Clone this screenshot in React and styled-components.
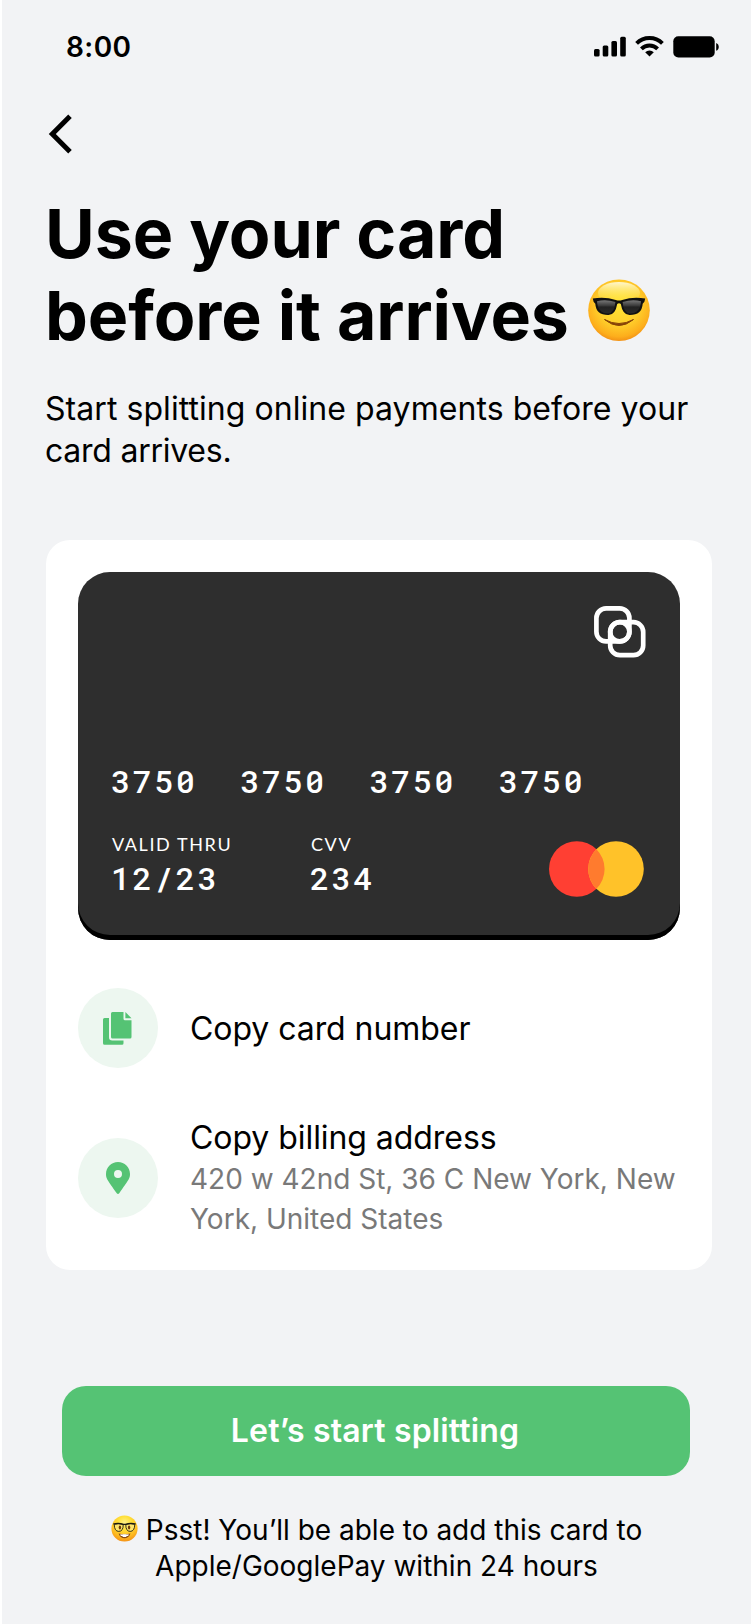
import React from "react";
import styled, { createGlobalStyle } from "styled-components";

const GlobalStyle = createGlobalStyle`
  * { box-sizing: border-box; }
  body {
    margin: 0;
    background: #f2f3f5;
    color: #000;
    font-family: Inter, "Liberation Sans", sans-serif;
  }
  h1, p { margin: 0; }
  svg { display: block; flex: none; }
`;

const Screen = styled.main`
  display: flex;
  flex-direction: column;
  width: 751px;
  height: 1624px;
  border-left: 2px solid #fff;
  background: #f2f3f5;
  overflow: hidden;
`;

const StatusBar = styled.header`
  display: flex;
  align-items: center;
  justify-content: space-between;
  height: 94px;
  padding: 0 32px 0 64px;
`;

const Time = styled.span`
  font-size: 28px;
  font-weight: 600;
  line-height: 32px;
  letter-spacing: 0.4px;
`;

const StatusIcons = styled.div`
  display: flex;
  align-items: flex-start;
  gap: 9px;
  height: 22px;
`;

const BackButton = styled.button`
  align-self: flex-start;
  display: flex;
  margin: 20px 0 0 44px;
  padding: 0;
  border: 0;
  background: none;
`;

const Intro = styled.section`
  margin-top: 38px;
  padding-left: 43px;
`;

const Title = styled.h1`
  font-size: 68px;
  font-weight: 700;
  line-height: 82px;
  letter-spacing: -0.08px;
  white-space: nowrap;
`;

const TitleRow = styled.span`
  display: flex;
  gap: 19px;

  svg { margin-top: 5px; }
`;

const Subtitle = styled.p`
  margin-top: 32px;
  width: 660px;
  font-size: 32px;
  line-height: 42px;
  letter-spacing: 0.06px;
`;

const SubtitleEnd = styled.span`
  letter-spacing: -0.25px;
`;

const Panel = styled.section`
  width: 666px;
  margin: 68px 0 0 44px;
  padding: 32px 32px 31px;
  border-radius: 24px;
  background: #fff;
`;

const PaymentCard = styled.div`
  display: flex;
  flex-direction: column;
  height: 368px;
  padding: 34px 34px 0;
  border-radius: 32px;
  background: #2e2e2e;
  box-shadow: inset 0 -5px 0 #000;
  color: #fff;
`;

const CardTop = styled.div`
  display: flex;
  justify-content: flex-end;
  height: 155px;
`;

const Digits = styled.span`
  font-family: "Roboto Mono", "Liberation Mono", monospace;
  font-size: 32px;
  font-weight: 500;
  line-height: 40px;
  letter-spacing: 2.4px;
`;

const CardNumber = styled.div`
  display: flex;
  gap: 42.8px;
  margin-left: -1px;
`;

const CardFooter = styled.div`
  display: flex;
  justify-content: space-between;
  align-items: flex-start;
  margin-top: 32px;
  padding-right: 2px;

  > svg { margin-top: 8px; }
`;

const CardFields = styled.div`
  display: flex;
`;

const Field = styled.div`
  display: flex;
  flex-direction: column;
  width: ${(p) => p.$width}px;

  ${Digits} { margin: 3px 0 0 -1px; }
`;

const FieldLabel = styled.span`
  font-family: Lato, sans-serif;
  font-size: 18px;
  line-height: 22px;
  letter-spacing: 1.6px;
`;

const ActionRow = styled.div`
  display: flex;
  align-items: center;
  gap: 32px;
  margin-top: 48px;
`;

const ActionText = styled.div`
  padding-top: ${(p) => p.$offset}px;
`;

const IconBadge = styled.span`
  display: flex;
  align-items: center;
  justify-content: center;
  flex: none;
  width: 80px;
  height: 80px;
  border-radius: 50%;
  background: #edf7f0;
`;

const ActionTitle = styled.div`
  font-size: 32px;
  line-height: 42px;
  letter-spacing: -0.06px;
`;

const Address = styled.div`
  font-size: 28px;
  line-height: 40px;
  color: #797979;
`;

const PrimaryButton = styled.button`
  flex: none;
  width: 628px;
  height: 90px;
  margin: 116px 0 0 60px;
  padding: 0 2px 0 0;
  border: 0;
  border-radius: 24px;
  background: #55c374;
  color: #fff;
  font: 600 32px/40px Inter, sans-serif;
  letter-spacing: 0.15px;
`;

const Hint = styled.p`
  margin-top: 36px;
  font-size: 28px;
  line-height: 36px;
  text-align: center;
`;

const HintRow = styled.span`
  display: flex;
  justify-content: center;
  gap: 8px;

  svg { margin-top: 3px; }
`;

const SignalIcon = () => (
  <svg width="32" height="22" viewBox="0 0 32 22">
    <rect x="0" y="13" width="5.6" height="7.5" rx="1.5" />
    <rect x="8.7" y="9.5" width="5.6" height="11" rx="1.5" />
    <rect x="17.4" y="5" width="5.6" height="15.5" rx="1.5" />
    <rect x="26.2" y="0.8" width="5.6" height="19.7" rx="1.5" />
  </svg>
);

const WifiIcon = () => (
  <svg width="29" height="22" viewBox="0 0 29 22" fill="none" stroke="#000" strokeWidth="3.9">
    <path d="M1.6 7.4a18.2 18.2 0 0 1 25.8 0" />
    <path d="M6.4 12.9a11.5 11.5 0 0 1 16.2 0" />
    <path d="M14.5 20.500 10.200 16.200a6.100 6.100 0 0 1 8.600 0z" fill="#000" stroke="none" />
  </svg>
);

const BatteryIcon = () => (
  <svg width="46" height="22" viewBox="0 0 46 22">
    <rect x="0.3" y="0.2" width="41.4" height="21.2" rx="5" />
    <path d="M43.2 7c3.4 1.4 3.4 6.4 0 7.8z" />
  </svg>
);

const ChevronIcon = () => (
  <svg width="28" height="40" viewBox="0 0 28 40" fill="none" stroke="#000" strokeWidth="5">
    <path d="M24 2.200 6.300 20l17.700 17.800" />
  </svg>
);

const SunglassesFace = () => (
  <svg width="62" height="63" viewBox="0 0 62 63">
    <defs>
      <radialGradient id="sunFace" cx="50%" cy="40%" r="62%">
        <stop offset="0" stopColor="#ffe436" />
        <stop offset="0.55" stopColor="#ffcf2b" />
        <stop offset="0.85" stopColor="#fdae1c" />
        <stop offset="1" stopColor="#f08a14" />
      </radialGradient>
      <linearGradient id="sunShine" x1="0" y1="0" x2="0" y2="1">
        <stop offset="0" stopColor="#fffbe0" stopOpacity="0.9" />
        <stop offset="1" stopColor="#ffee40" stopOpacity="0" />
      </linearGradient>
      <linearGradient id="sunLens" x1="0" y1="0" x2="0" y2="1">
        <stop offset="0" stopColor="#777" />
        <stop offset="0.45" stopColor="#343434" />
        <stop offset="0.5" stopColor="#222" />
        <stop offset="1" stopColor="#292929" />
      </linearGradient>
    </defs>
    <circle cx="31" cy="31.300" r="30.800" fill="url(#sunFace)" />
    <ellipse cx="31" cy="14" rx="21" ry="11" fill="url(#sunShine)" />
    <path
      d="M4.800 19.500q12-2.200 23 1.500 3.200 1 6.400 0 11-3.700 23-1.500l-.8 3.200-1.700 2q-.8 11.500-13.200 11.300Q34.600 36 32.800 25q-1.800-1.600-3.600 0Q27.400 36 20.500 36 8.100 36.200 7.300 24.700l-1.700-2z"
      fill="#111"
    />
    <path d="M9 22.200q9-2.200 18.400.8Q26.500 34.300 20 34.400 9.600 34.300 9 22.200z" fill="url(#sunLens)" />
    <path d="M53 22.200q-9-2.200-18.400.8Q35.500 34.300 42 34.400 52.400 34.300 53 22.200z" fill="url(#sunLens)" />
    <path d="M16.500 40.500Q31 52.500 45.500 40.500 31 48.500 16.500 40.500z" fill="#874307" stroke="#874307" strokeWidth="1" strokeLinejoin="round" />
  </svg>
);

const NerdFace = () => (
  <svg width="27" height="27" viewBox="0 0 27 27">
    <defs>
      <radialGradient id="nerdFace" cx="50%" cy="28%" r="72%">
        <stop offset="0" stopColor="#fff08a" />
        <stop offset="0.35" stopColor="#ffe03a" />
        <stop offset="0.75" stopColor="#fdba20" />
        <stop offset="1" stopColor="#f59217" />
      </radialGradient>
    </defs>
    <circle cx="13.500" cy="13.500" r="13.100" fill="url(#nerdFace)" />
    <g fill="#ffe56a" stroke="#1c1a12" strokeWidth="0.900">
      <path d="M3.200 9.300q4.500-1.200 9 .2.200 6.800-4.400 6.900Q3.400 16.400 3.200 9.300z" />
      <path d="M23.800 9.300q-4.500-1.200-9 .2-.2 6.800 4.400 6.900 4.400 0 4.600-7.100z" />
    </g>
    <path d="M2.200 9q5.500-1.600 10.300.4h2Q19.300 7.400 24.800 9" fill="none" stroke="#1c1a12" strokeWidth="1.300" />
    <ellipse cx="8.900" cy="12.500" rx="1.200" ry="1.900" fill="#6d3a0b" />
    <ellipse cx="18.100" cy="12.500" rx="1.200" ry="1.900" fill="#6d3a0b" />
    <path d="M7.500 18.600q6 1.500 12 0-1.800 4.700-6 4.700t-6-4.700z" fill="#8a4a12" />
    <path d="M9.200 19.200q4.300.7 8.600 0l-.6 1.700H9.800z" fill="#fff" />
    <path d="M11.600 19.400h3.800v2.600h-3.800z" fill="#fff" />
  </svg>
);

const BrandLogo = () => (
  <svg width="52" height="52" viewBox="0 0 52 52" fill="none" stroke="#fff" strokeWidth="4.700">
    <rect x="2.400" y="2.400" width="33" height="33" rx="9.700" />
    <rect x="16.200" y="16.200" width="33" height="33" rx="9.700" />
    <circle cx="25.800" cy="25.800" r="9.600" />
  </svg>
);

const CardNetworkLogo = () => (
  <svg width="95" height="56" viewBox="0 0 95 56">
    <circle cx="27.800" cy="28" r="27.800" fill="#ff3f33" />
    <circle cx="67" cy="28" r="27.800" fill="#ffc229" />
    <path d="M47.400 8.300a27.800 27.800 0 0 1 0 39.400 27.800 27.800 0 0 1 0-39.400z" fill="#ff7b2e" />
  </svg>
);

const DocumentsIcon = () => (
  <svg width="30" height="33" viewBox="0 0 30 33" fill="#55c374">
    <path d="M1.500 6H6v19.200q0 3.300 3.300 3.300h11.200v2.700q0 1.500-1.500 1.500H1.500Q0 32.700 0 31.200V7.500Q0 6 1.500 6z" />
    <path d="M9.500 0h11v6.800q0 1.500 1.500 1.500h6.500v16.700q0 1.500-1.500 1.500H9.500Q8 26.500 8 25V1.500Q8 0 9.500 0z" />
    <path d="M22.400 0 28.500 6.200h-6.100z" />
  </svg>
);

const PinIcon = () => (
  <svg width="24" height="32" viewBox="0 0 384 512" fill="#55c374">
    <path
      fillRule="evenodd"
      d="M172.268 501.670C26.970 291.031 0 269.413 0 192 0 85.961 85.961 0 192 0s192 85.961 192 192c0 77.413-26.970 99.031-172.268 309.670-9.535 13.774-29.930 13.773-39.464 0zM192 256a64 64 0 1 0 0-128 64 64 0 1 0 0 128z"
    />
  </svg>
);

const numberGroups = ["3750", "3750", "3750", "3750"];

export default function App() {
  return (
    <>
      <GlobalStyle />
      <Screen>
        <StatusBar>
          <Time>8:00</Time>
          <StatusIcons>
            <SignalIcon />
            <WifiIcon />
            <BatteryIcon />
          </StatusIcons>
        </StatusBar>

        <BackButton aria-label="Back">
          <ChevronIcon />
        </BackButton>

        <Intro>
          <Title>
            Use your card
            <TitleRow>
              before it arrives
              <SunglassesFace />
            </TitleRow>
          </Title>
          <Subtitle>
            Start splitting online payments before your
            <br />
            <SubtitleEnd>card arrives.</SubtitleEnd>
          </Subtitle>
        </Intro>

        <Panel>
          <PaymentCard>
            <CardTop>
              <BrandLogo />
            </CardTop>
            <CardNumber>
              {numberGroups.map((group, i) => (
                <Digits key={i}>{group}</Digits>
              ))}
            </CardNumber>
            <CardFooter>
              <CardFields>
                <Field $width={199}>
                  <FieldLabel>VALID THRU</FieldLabel>
                  <Digits>12/23</Digits>
                </Field>
                <Field $width={100}>
                  <FieldLabel>CVV</FieldLabel>
                  <Digits>234</Digits>
                </Field>
              </CardFields>
              <CardNetworkLogo />
            </CardFooter>
          </PaymentCard>

          <ActionRow>
            <IconBadge>
              <DocumentsIcon />
            </IconBadge>
            <ActionText $offset={2}>
              <ActionTitle>Copy card number</ActionTitle>
            </ActionText>
          </ActionRow>

          <ActionRow>
            <IconBadge>
              <PinIcon />
            </IconBadge>
            <ActionText $offset={1}>
              <ActionTitle>Copy billing address</ActionTitle>
              <Address>
                420 w 42nd St, 36 C New York, New
                <br />
                York, United States
              </Address>
            </ActionText>
          </ActionRow>
        </Panel>

        <PrimaryButton>Let’s start splitting</PrimaryButton>

        <Hint>
          <HintRow>
            <NerdFace />
            Psst! You’ll be able to add this card to
          </HintRow>
          Apple/GooglePay within 24 hours
        </Hint>
      </Screen>
    </>
  );
}
